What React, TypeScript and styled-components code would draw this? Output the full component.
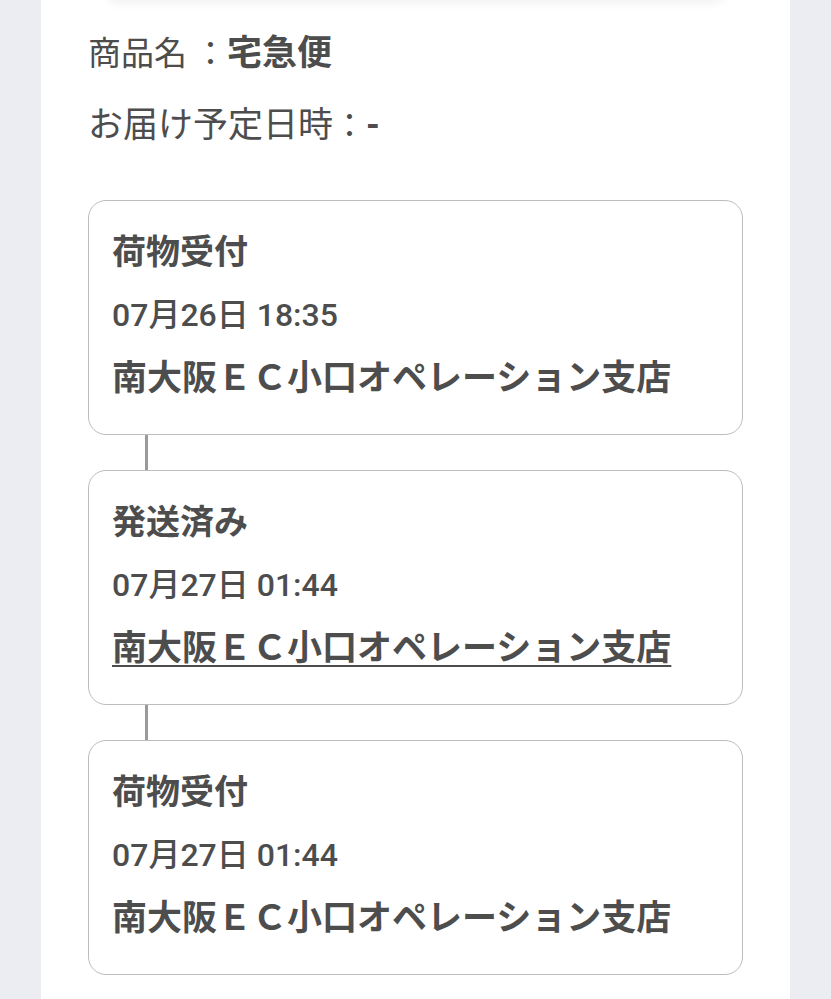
import React from "react";
import styled, { createGlobalStyle } from "styled-components";

const Global = createGlobalStyle`
  html, body { margin: 0; padding: 0; background: #ececf3; }
  body { font-family: Roboto, "Noto Sans CJK JP", sans-serif; color: #4d4d4d; }
`;

const Page = styled.div`
  display: flex;
  justify-content: center;
  padding: 0 41px;
  min-height: 100vh;
  overflow: hidden;
`;

const Panel = styled.main`
  flex: 1;
  background: #fff;
  padding: 0 47px 40px;
  display: flex;
  flex-direction: column;
`;

const PrevShadow = styled.div`
  height: 60px;
  margin: -60px 18px 0;
  border-radius: 12px;
  box-shadow: 0 4px 10px rgba(0, 0, 0, 0.05);
`;

const InfoRow = styled.div<{ $top: number; $size: number }>`
  margin-top: ${(p) => p.$top}px;
  font-size: ${(p) => p.$size}px;
  line-height: 40px;
  white-space: nowrap;
  display: flex;
  align-items: baseline;
`;

const Colon = styled.span<{ $gap: number }>`
  font-size: 33px;
  margin-left: ${(p) => p.$gap}px;
`;

const Strong = styled.span<{ $gap?: number }>`
  font-size: 35px;
  font-weight: 700;
  margin-left: ${(p) => p.$gap ?? 0}px;
`;

const Timeline = styled.div`
  display: flex;
  flex-direction: column;
  margin-top: 54px;
`;

const Card = styled.section`
  border: 1px solid #bcbcbc;
  border-radius: 18px;
  padding: 20px 23px 24px;
  display: flex;
  flex-direction: column;
`;

const Title = styled.div`
  font-size: 34px;
  font-weight: 700;
  line-height: 63px;
`;

const DateLine = styled.div`
  font-size: 32px;
  font-weight: 500;
  line-height: 63px;
`;

const Place = styled.div<{ $link?: boolean }>`
  font-size: 35px;
  font-weight: 700;
  line-height: 63px;
  white-space: nowrap;
  text-decoration: ${(p) => (p.$link ? "underline" : "none")};
  text-decoration-thickness: 2px;
  text-underline-offset: 5px;
`;

const Connector = styled.div`
  width: 3px;
  height: 35px;
  margin-left: 57px;
  background: #9a9a9a;
`;

const events = [
  { title: "荷物受付", date: "07月26日 18:35", place: "南大阪ＥＣ小口オペレーション支店", link: false },
  { title: "発送済み", date: "07月27日 01:44", place: "南大阪ＥＣ小口オペレーション支店", link: true },
  { title: "荷物受付", date: "07月27日 01:44", place: "南大阪ＥＣ小口オペレーション支店", link: false },
];

export default function App() {
  return (
    <>
      <Global />
      <Page>
        <Panel>
          <PrevShadow />
          <InfoRow $top={34} $size={33}>
            <span>商品名</span>
            <Colon $gap={7}>：</Colon>
            <Strong>宅急便</Strong>
          </InfoRow>
          <InfoRow $top={32} $size={35}>
            <span>お届け予定日時</span>
            <Colon $gap={0}>：</Colon>
            <Strong $gap={0}>-</Strong>
          </InfoRow>
          <Timeline>
            {events.map((e, i) => (
              <React.Fragment key={i}>
                {i > 0 && <Connector />}
                <Card>
                  <Title>{e.title}</Title>
                  <DateLine>{e.date}</DateLine>
                  <Place $link={e.link}>{e.place}</Place>
                </Card>
              </React.Fragment>
            ))}
          </Timeline>
        </Panel>
      </Page>
    </>
  );
}
